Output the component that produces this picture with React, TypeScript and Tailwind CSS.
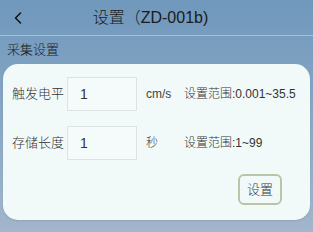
import { ChevronLeft } from 'lucide-react'

const font = { fontFamily: '"Liberation Sans", "Noto Sans CJK SC", sans-serif' }

function Row({ label, value, unit, range }: { label: string; value: string; unit: string; range: string }) {
  return (
    <div className="flex items-center h-[34px]">
      <span className="w-[55px] text-[13px] font-light text-[#333]">{label}</span>
      <div className="w-[70px] h-[34px] border border-[#dde3e3] bg-[#f5fbfa] flex items-center pl-[12px] text-[14px] text-[#333]">
        {value}
      </div>
      <span className="w-[47px] pl-[9px] text-[12px] font-light text-[#444]">{unit}</span>
      <span className="text-[12px] font-light text-[#333] whitespace-nowrap">{range}</span>
    </div>
  )
}

export default function App() {
  return (
    <div className="w-[313px] h-[232px] bg-gradient-to-b from-[#6f98bc] to-[#a2b6cc] flex flex-col" style={font}>
      <div className="h-[36px] flex items-center border-b border-[#a9c1d6] relative">
        <ChevronLeft className="w-[20px] h-[20px] ml-[8px] text-[#111]" strokeWidth={1.8} />
        <span className="absolute left-0 right-0 text-center text-[16px] font-light text-[#1a1a1a] -translate-x-[6px]">设置（ZD-001b)</span>
      </div>
      <div className="px-[7px] pt-[4px] h-[28px] text-[13px] font-light text-[#1a1a1a]">采集设置</div>
      <div className="mx-[3px] h-[156px] bg-[#f2faf9] rounded-[15px] pl-[9px] pt-[13px] flex flex-col shadow-[0_1px_2px_rgba(0,0,0,0.1)]">
        <Row label="触发电平" value="1" unit="cm/s" range="设置范围:0.001~35.5" />
        <div className="h-[15px]" />
        <Row label="存储长度" value="1" unit="秒" range="设置范围:1~99" />
        <div className="flex justify-end pr-[28px] pt-[14px]">
          <button className="w-[44px] h-[31px] border-2 border-[#b9c4a8] rounded-[6px] text-[13px] font-light text-[#333] bg-[#f2faf9]">
            设置
          </button>
        </div>
      </div>
    </div>
  )
}
